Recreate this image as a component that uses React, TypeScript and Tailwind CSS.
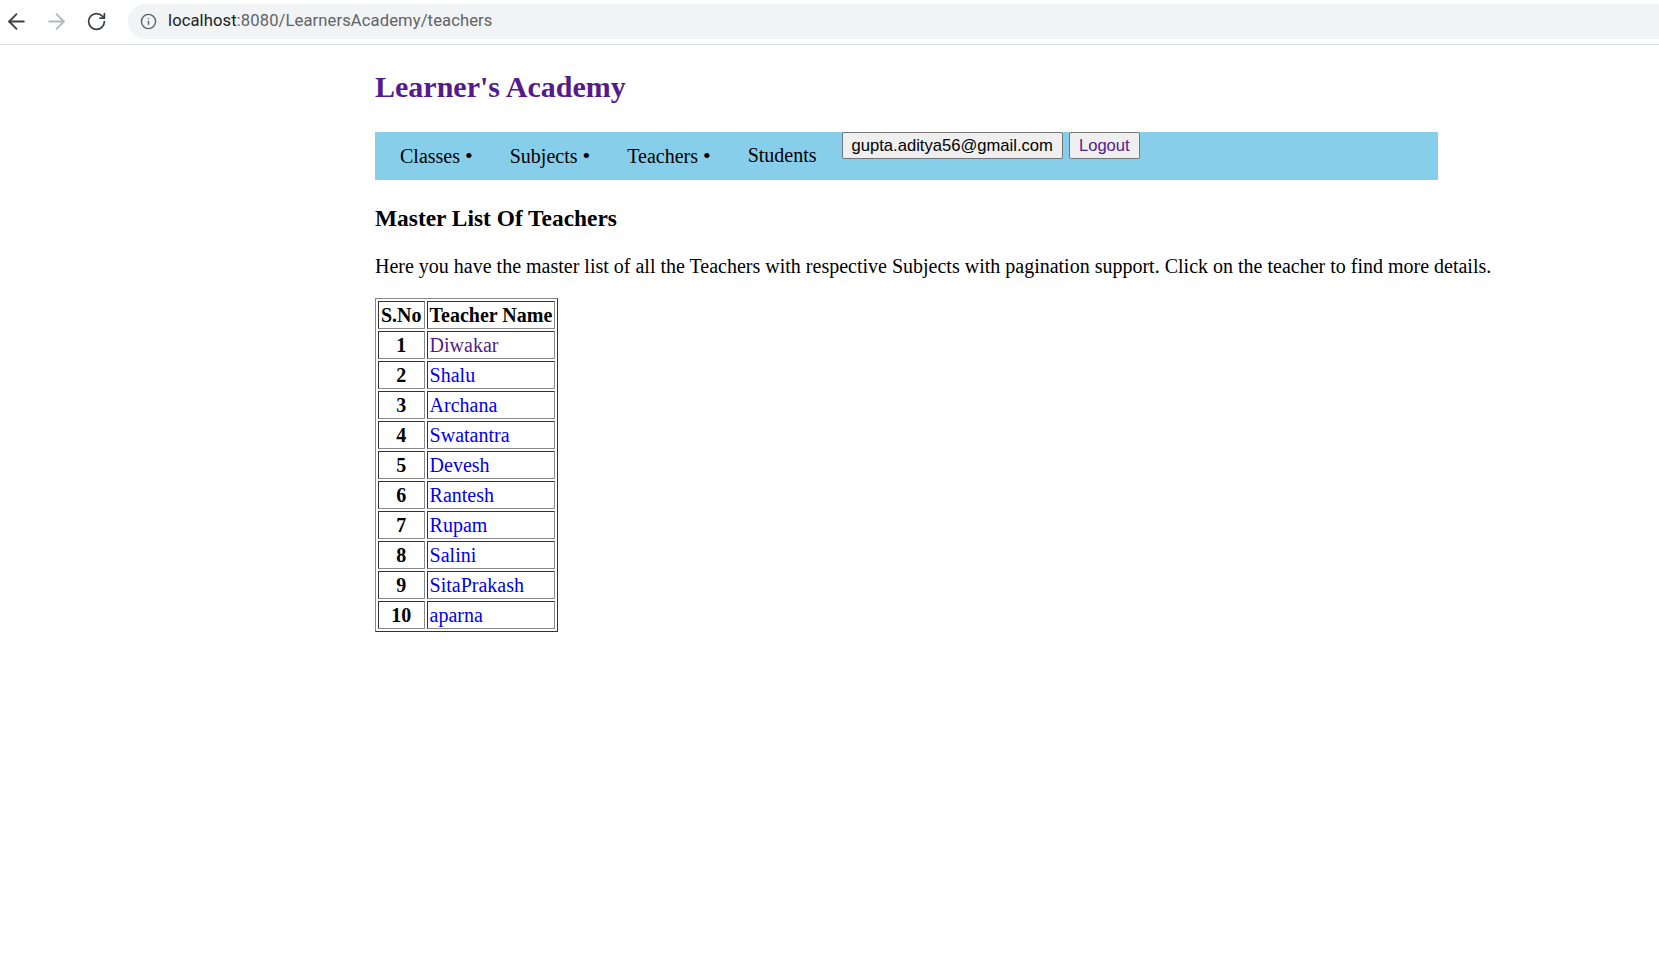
import { ArrowLeft, ArrowRight, RotateCw, Info } from 'lucide-react';

const teachers = [
  'Diwakar',
  'Shalu',
  'Archana',
  'Swatantra',
  'Devesh',
  'Rantesh',
  'Rupam',
  'Salini',
  'SitaPrakash',
  'aparna',
];

function BrowserBar() {
  return (
    <div className="flex h-[45px] items-start border-b border-[#dadce0] bg-white pt-[4px]">
      <div className="flex h-[35px] items-center">
        <ArrowLeft size={25} strokeWidth={1.8} className="ml-[4px] text-[#3c4043]" />
        <ArrowRight size={25} strokeWidth={1.8} className="ml-[15px] text-[#b5b8bb]" />
        <RotateCw size={21} strokeWidth={2} className="ml-[17px] text-[#3c4043]" />
      </div>
      <div className="ml-[21px] flex h-[35px] flex-1 items-center rounded-l-full bg-[#f1f3f4] pl-[12px]">
        <Info size={17} strokeWidth={2} className="text-[#5f6368]" />
        <span className="ml-[11px] font-['Roboto','Noto_Sans',sans-serif] text-[16.6px] tracking-[0.1px]">
          <span className="text-[#202124]">localhost</span>
          <span className="text-[#5f6368]">:8080/LearnersAcademy/teachers</span>
        </span>
      </div>
    </div>
  );
}

function NavBar() {
  const items = ['Classes', 'Subjects', 'Teachers'];
  return (
    <nav className="mt-[28px] flex h-[48px] w-[1063px] items-start bg-[#87ceeb] pl-[25px]">
      {items.map((item) => (
        <span key={item} className="mr-[37px] pt-[12px] text-[20px] leading-[23px] text-black">
          {item} <span className="text-[22px]">•</span>
        </span>
      ))}
      <span className="pt-[12px] text-[20px] leading-[23px] text-black">Students</span>
      <button className="ml-[25px] h-[27px] rounded-[2px] border border-[#767676] bg-[#efefef] px-[9px] font-['Liberation_Sans',Arial,sans-serif] text-[16.6px] leading-[19px] text-black">
        gupta.aditya56@gmail.com
      </button>
      <button className="ml-[6px] h-[27px] rounded-[2px] border border-[#767676] bg-[#efefef] px-[9px] font-['Liberation_Sans',Arial,sans-serif] text-[16.6px] leading-[19px] text-[#551a8b]">
        Logout
      </button>
    </nav>
  );
}

function TeacherTable() {
  const cell =
    'border border-t-[#333] border-l-[#333] border-r-[#8a8a8a] border-b-[#8a8a8a] px-[2px] py-[1px] text-[20px] leading-[24px]';
  return (
    <table className="mt-[21px] border-separate border-spacing-[2px] border border-t-[#8a8a8a] border-l-[#8a8a8a] border-r-[#333] border-b-[#333]">
      <thead>
        <tr>
          <th className={`${cell} font-bold`}>S.No</th>
          <th className={`${cell} font-bold`}>Teacher Name</th>
        </tr>
      </thead>
      <tbody>
        {teachers.map((name, i) => (
          <tr key={name}>
            <td className={`${cell} text-center font-bold`}>{i + 1}</td>
            <td className={`${cell} text-left`}>
              <a className={i === 0 ? 'text-[#551a8b]' : 'text-[#0000ee]'} href="#">
                {name}
              </a>
            </td>
          </tr>
        ))}
      </tbody>
    </table>
  );
}

export default function App() {
  return (
    <div className="min-h-screen bg-white font-['Liberation_Serif','Times_New_Roman',serif] text-black">
      <BrowserBar />
      <main className="pl-[375px] pt-[25px]">
        <h2 className="text-[30px] font-bold leading-[34px] text-[#551a8b]">Learner's Academy</h2>
        <NavBar />
        <h3 className="mt-[25px] text-[23.4px] font-bold leading-[26px]">Master List Of Teachers</h3>
        <p className="mt-[24px] text-[20px] leading-[22px]">
          Here you have the master list of all the Teachers with respective Subjects with pagination support. Click on
          the teacher to find more details.
        </p>
        <TeacherTable />
      </main>
    </div>
  );
}
